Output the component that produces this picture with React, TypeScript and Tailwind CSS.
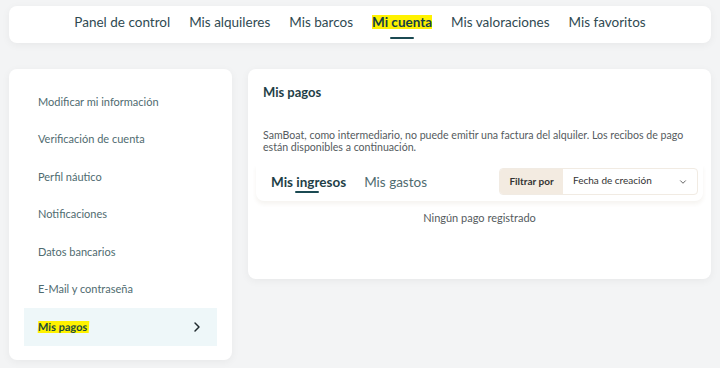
import { ChevronDown, ChevronRight } from "lucide-react";

const navItems = [
  "Panel de control",
  "Mis alquileres",
  "Mis barcos",
  "Mi cuenta",
  "Mis valoraciones",
  "Mis favoritos",
];

const sideItems = [
  "Modificar mi información",
  "Verificación de cuenta",
  "Perfil náutico",
  "Notificaciones",
  "Datos bancarios",
  "E-Mail y contraseña",
  "Mis pagos",
];

export default function App() {
  return (
    <main className="min-h-[368px] w-[720px] bg-[#f3f4f5] pt-[6px] font-['Lato',sans-serif]">
      {/* Top navigation */}
      <nav className="mx-[9px] flex h-[37px] items-center justify-center gap-[19px] rounded-lg bg-white shadow-[0_2px_8px_rgba(0,0,0,0.05)]">
        {navItems.map((item) => {
          const active = item === "Mi cuenta";
          return (
            <div key={item} className="relative flex h-full items-center pb-[5px]">
              {active ? (
                <span className="bg-[#fff200] text-[13.5px] leading-[14px] font-bold text-[#153f47]">
                  {item}
                </span>
              ) : (
                <span className="text-[13.5px] text-[#2f4a52]">{item}</span>
              )}
              {active && (
                <span className="absolute bottom-[4px] left-1/2 h-[2px] w-[24px] -translate-x-1/2 rounded bg-[#1b4a52]" />
              )}
            </div>
          );
        })}
      </nav>

      <div className="mt-[26px] flex items-start gap-4 px-[9px]">
        {/* Sidebar */}
        <aside className="w-[223px] rounded-lg bg-white px-[15px] py-[14px] shadow-[0_2px_8px_rgba(0,0,0,0.05)]">
          {sideItems.map((item) => {
            const active = item === "Mis pagos";
            return (
              <div
                key={item}
                className={`flex h-[37.5px] items-center justify-between pl-[14px] pr-[12px] ${
                  active ? "bg-[#eef7f9]" : ""
                }`}
              >
                {active ? (
                  <span className="-skew-x-3 bg-[#fff200] pr-[2px] text-[11px] leading-[12px] font-bold text-[#1d4d3c]">
                    {item}
                  </span>
                ) : (
                  <span className="text-[11px] text-[#4f6b70]">{item}</span>
                )}
                {active && (
                  <ChevronRight size={16} strokeWidth={2.2} className="text-[#1f2a2e]" />
                )}
              </div>
            );
          })}
        </aside>

        {/* Payments panel */}
        <section className="h-[210px] flex-1 rounded-lg bg-white pt-[15px] shadow-[0_2px_8px_rgba(0,0,0,0.05)]">
          <h2 className="px-[15px] text-[13px] leading-[16px] font-bold text-[#1f3f47]">
            Mis pagos
          </h2>
          <p className="mt-[29px] px-[15px] text-[10.6px] leading-[12px] text-[#555b5e]">
            SamBoat, como intermediario, no puede emitir una factura del alquiler. Los recibos de pago
            están disponibles a continuación.
          </p>

          <div className="mx-[8px] mt-[12px] flex h-[36px] items-center justify-between rounded-b-lg pb-[3px] pl-[15px] pr-[5px] shadow-[0_3px_4px_rgba(120,90,40,0.07)]">
            <div className="flex items-center gap-[18px]">
              <div className="relative">
                <span className="block text-[13.5px] leading-[18px] font-bold text-[#1f3f47]">
                  Mis ingresos
                </span>
                <span className="absolute -bottom-[2px] left-[24px] h-[2px] w-[24px] rounded bg-[#1b4a52]" />
              </div>
              <span className="block text-[13.5px] leading-[18px] text-[#4f6b70]">Mis gastos</span>
            </div>
            <div className="flex h-[27px] w-[199px] overflow-hidden rounded border border-[#f1ebe3]">
              <div className="flex w-[63px] items-center justify-center bg-[#f3ebe1] text-[10px] font-bold text-[#333]">
                Filtrar por
              </div>
              <div className="flex flex-1 items-center justify-between pl-[10px] pr-[9px] text-[10px] text-[#333]">
                <span className="-mt-[3px]">Fecha de creación</span>
                <ChevronDown size={10} strokeWidth={2} className="text-[#444]" />
              </div>
            </div>
          </div>

          <p className="mt-[11px] text-center text-[11px] leading-[12px] text-[#555b5e]">
            Ningún pago registrado
          </p>
        </section>
      </div>
    </main>
  );
}
